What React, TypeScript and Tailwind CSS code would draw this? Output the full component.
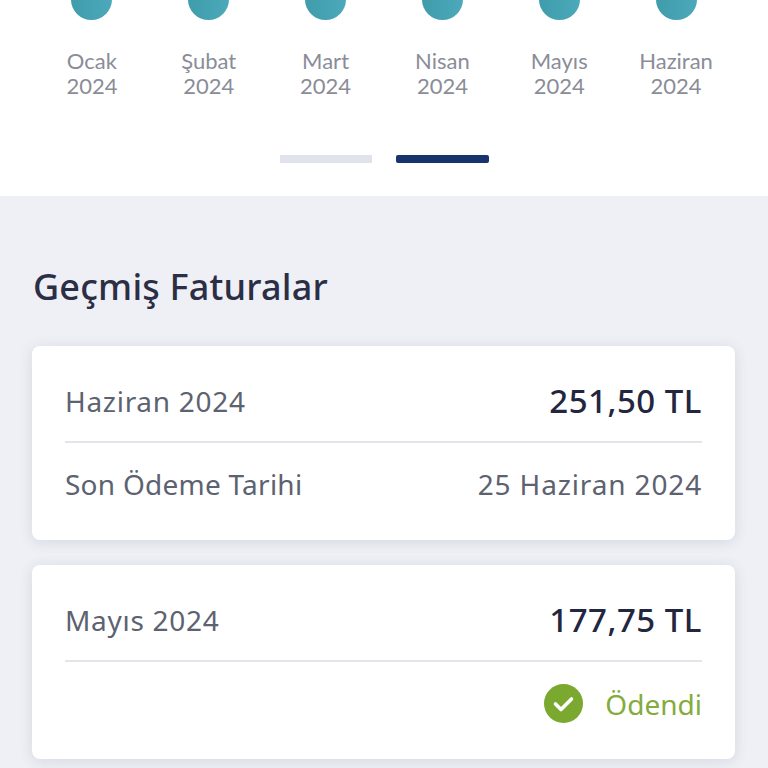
import React from 'react';

const months = ['Ocak', 'Şubat', 'Mart', 'Nisan', 'Mayıs', 'Haziran'];

function CheckBadge() {
  return (
    <svg width="39" height="39" viewBox="0 0 39 39" className="shrink-0">
      <circle cx="19.5" cy="19.5" r="19.5" fill="#7ba82f" />
      <path d="M11.5 20l5.5 5.5 10.5-10.5" fill="none" stroke="#fff" strokeWidth="3.6" strokeLinecap="round" strokeLinejoin="round" />
    </svg>
  );
}

function BillCard({ children }: { children: React.ReactNode }) {
  return (
    <div className="h-[194px] rounded-[8px] bg-white px-[33px] shadow-[0_2px_14px_rgba(60,70,100,0.14)]">
      {children}
    </div>
  );
}

function BillHeader({ month, amount }: { month: string; amount: string }) {
  return (
    <div className="flex h-[97px] items-center justify-between border-b-2 border-[#e4e5ea] pt-[14px]">
      <span className="text-[28px] tracking-[0.7px] text-[#5d6270]">{month}</span>
      <span className="text-[33px] font-medium tracking-[0.5px] text-[#23263f]">{amount}</span>
    </div>
  );
}

export default function App() {
  return (
    <div className="h-[768px] w-[768px] overflow-hidden bg-[#eef0f5] font-['Noto_Sans','Lato',sans-serif]">
      {/* Month carousel */}
      <div className="h-[196px] bg-white px-[33.5px]">
        <div className="grid grid-cols-6">
          {months.map((m) => (
            <div key={m} className="flex flex-col items-center">
              <div className="-mt-[21px] h-[41px] w-[41px] rounded-full bg-gradient-to-r from-[#3f9cab] to-[#4ba9ba]" />
              <div className="mt-[28px] text-center font-['Lato','Noto_Sans',sans-serif] text-[22px] leading-[25px] text-[#8a8d98]">
                {m}
                <br />
                2024
              </div>
            </div>
          ))}
        </div>
        <div className="mt-[57px] flex justify-center gap-[24px]">
          <div className="h-[8px] w-[92px] bg-[#e1e3ec]" />
          <div className="h-[8px] w-[93px] rounded-[2px] bg-[#17346c]" />
        </div>
      </div>

      {/* Past bills */}
      <div className="px-[32px] pt-[66px]">
        <h2 className="ml-[1px] text-[36px] leading-[50px] font-medium tracking-[0.2px] text-[#2b2e45]">Geçmiş Faturalar</h2>
        <div className="mt-[34px] flex flex-col gap-[25px] pr-[1px]">
          <BillCard>
            <BillHeader month="Haziran 2024" amount="251,50 TL" />
            <div className="flex h-[82px] items-center justify-between">
              <span className="text-[28px] tracking-[0.25px] text-[#5d6270]">Son Ödeme Tarihi</span>
              <span className="text-[28px] tracking-[0.85px] text-[#5d6270]">25 Haziran 2024</span>
            </div>
          </BillCard>
          <BillCard>
            <BillHeader month="Mayıs 2024" amount="177,75 TL" />
            <div className="flex h-[83px] items-center justify-end gap-[22px]">
              <CheckBadge />
              <span className="text-[28px] text-[#84ab3d]">Ödendi</span>
            </div>
          </BillCard>
        </div>
      </div>
    </div>
  );
}
